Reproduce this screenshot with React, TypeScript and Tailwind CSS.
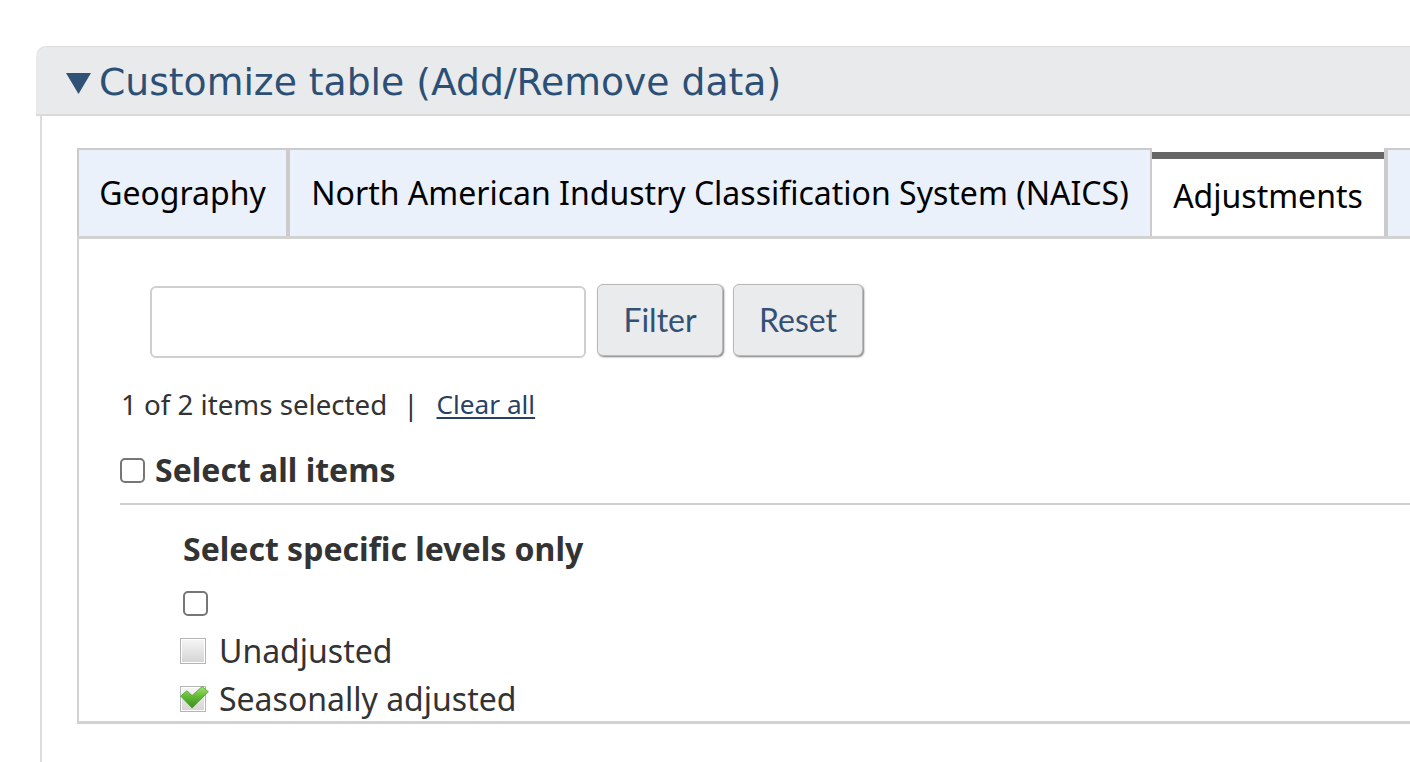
const tabs = [
  { text: "Geography", width: "w-[211px]" },
  { text: "North American Industry Classification System (NAICS)", width: "w-[864px]" },
]

const GrayBox = ({ checked }: { checked?: boolean }) => (
  <span className="relative inline-block w-[26px] h-[26px] shrink-0">
    <span className="absolute inset-0 border border-[#b4b4b4] bg-gradient-to-b from-[#f6f6f6] to-[#d4d4d4] shadow-[inset_0_0_0_1px_#ffffff]" />
    {checked && (
      <svg viewBox="0 0 30 24" className="absolute left-[0px] top-[0px] w-[29px] h-[23px]">
        <defs>
          <linearGradient id="chk" x1="0" y1="0" x2="0" y2="1">
            <stop offset="0" stopColor="#a2e46e" />
            <stop offset="0.45" stopColor="#62bb36" />
            <stop offset="1" stopColor="#3b8f1d" />
          </linearGradient>
        </defs>
        <path d="M0.5 10.5 L7 5 L12.5 10 L23 0.5 L29.5 6 L12.5 23 Z" fill="url(#chk)" stroke="#4c9a2b" strokeWidth="0.8" strokeLinejoin="round" />
      </svg>
    )}
  </span>
)

const EmptyBox = () => (
  <span className="inline-block w-[25px] h-[25px] border-2 border-[#767676] rounded-[5px] bg-white shrink-0" />
)

export default function App() {
  return (
    <div className="w-[1410px] h-[762px] overflow-hidden bg-white pt-[46px] font-['Noto_Sans',sans-serif] text-[#333]">
      <div className="ml-[36px] w-[1500px]">
        <div className="h-[70px] bg-[#e9eaec] border-t border-[#dcdcdc] rounded-tl-[10px] border-b-2 border-b-[#dadada] flex items-center pl-[30px] pt-[5px]">
          <svg viewBox="0 0 25 21" className="w-[25px] h-[21px] mt-[1px]">
            <path d="M0 0 H25 L12.5 21 Z" fill="#2f5276" />
          </svg>
          <span className="ml-[8px] font-['DejaVu_Sans',sans-serif] text-[37.7px] leading-none text-[#2c5075]">
            Customize table (Add/Remove data)
          </span>
        </div>

        <div className="ml-[4px] border-l-2 border-[#dcdcdc] h-[700px] pt-[32px] pl-[35px]">
          <div className="border-l-2 border-b-[3px] border-[#d2d2d2] h-[576px]">
            <div className="flex h-[91px] border-b-[3px] border-[#d2d2d2] -ml-[2px]">
              {tabs.map((tab, i) => (
                <div
                  key={i}
                  className={`${tab.width} h-[88px] bg-[#eaf1fb] border-2 border-b-0 border-[#cbcbcb] flex items-center justify-center text-[32px] text-black`}
                >
                  {tab.text}
                </div>
              ))}
              <div className="w-[234px] h-[88px] bg-white pt-[4px] border-r-2 border-[#cbcbcb] flex flex-col">
                <div className="h-[7px] bg-[#666666]" />
                <div className="flex-1 flex items-center justify-center text-[32px] text-black pb-[3px]">
                  Adjustments
                </div>
              </div>
              <div className="w-[100px] h-[88px] bg-[#eaf1fb] border-l-2 border-t-2 border-[#cbcbcb]" />
            </div>

            <div className="flex items-start pl-[71px] mt-[45px] h-[74px]">
              <input className="w-[436px] h-[72px] mt-[2px] border-2 border-[#cfcfcf] rounded-[6px] bg-white outline-none" />
              <button className="ml-[11px] w-[126px] h-[72px] bg-[#eaebed] border border-[#b9b9b9] rounded-[6px] shadow-[1px_1px_2px_#7a7a7a] font-['Lato',sans-serif] text-[32px] text-[#335075]">
                Filter
              </button>
              <button className="ml-[10px] w-[130px] h-[72px] bg-[#eaebed] border border-[#b9b9b9] rounded-[6px] shadow-[1px_1px_2px_#7a7a7a] font-['Lato',sans-serif] text-[32px] text-[#335075]">
                Reset
              </button>
            </div>

            <div className="mt-[26px] h-[40px] pl-[42px] flex items-center text-[27.7px] leading-[40px]">
              <span>1 of 2 items selected</span>
              <span className="ml-[16px]">|</span>
              <span className="ml-[18px] text-[26.2px] underline underline-offset-[3px] decoration-[2px] text-[#284162]">Clear all</span>
            </div>

            <div className="mt-[26px] h-[40px] pl-[41px] flex items-center">
              <EmptyBox />
              <span className="ml-[10px] text-[32px] font-bold leading-[40px]">Select all items</span>
            </div>

            <div className="mt-[13px] ml-[41px] h-[2px] bg-[#cfcfcf]" />

            <div className="mt-[24px] h-[40px] pl-[104px] flex items-center text-[32px] font-bold">
              Select specific levels only
            </div>

            <div className="mt-[10px] pl-[101px]">
              <div className="h-[48px] flex items-center pl-[3px]">
                <EmptyBox />
              </div>
              <div className="h-[48px] flex items-center text-[32px]">
                <GrayBox />
                <span className="ml-[13px]">Unadjusted</span>
              </div>
              <div className="h-[47px] flex items-center text-[32px]">
                <GrayBox checked />
                <span className="ml-[13px]">Seasonally adjusted</span>
              </div>
            </div>
          </div>
        </div>
      </div>
    </div>
  )
}
